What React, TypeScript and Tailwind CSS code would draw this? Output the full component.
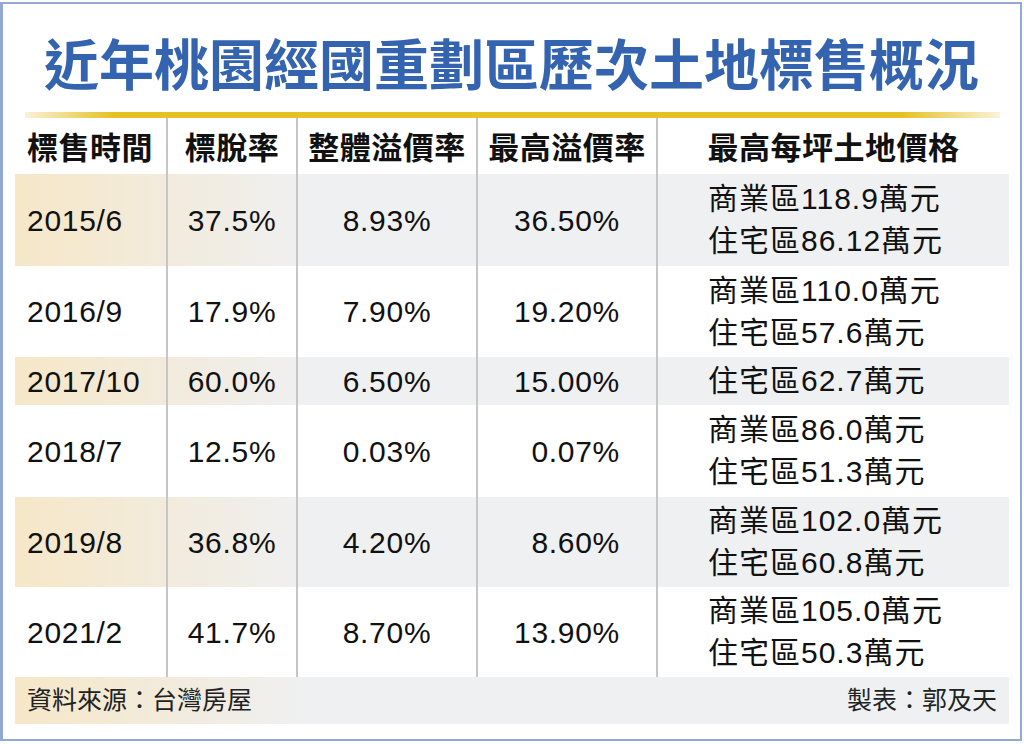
import React from "react";

type Row = {
  date: string;
  rate: string;
  premium: string;
  maxPremium: string;
  prices: string[];
  height: string;
  shaded: boolean;
};

const rows: Row[] = [
  { date: "2015/6", rate: "37.5%", premium: "8.93%", maxPremium: "36.50%", prices: ["商業區118.9萬元", "住宅區86.12萬元"], height: "h-[92px]", shaded: true },
  { date: "2016/9", rate: "17.9%", premium: "7.90%", maxPremium: "19.20%", prices: ["商業區110.0萬元", "住宅區57.6萬元"], height: "h-[91px]", shaded: false },
  { date: "2017/10", rate: "60.0%", premium: "6.50%", maxPremium: "15.00%", prices: ["住宅區62.7萬元"], height: "h-[48px]", shaded: true },
  { date: "2018/7", rate: "12.5%", premium: "0.03%", maxPremium: "0.07%", prices: ["商業區86.0萬元", "住宅區51.3萬元"], height: "h-[92px]", shaded: false },
  { date: "2019/8", rate: "36.8%", premium: "4.20%", maxPremium: "8.60%", prices: ["商業區102.0萬元", "住宅區60.8萬元"], height: "h-[90px]", shaded: true },
  { date: "2021/2", rate: "41.7%", premium: "8.70%", maxPremium: "13.90%", prices: ["商業區105.0萬元", "住宅區50.3萬元"], height: "h-[90px]", shaded: false },
];

const shade =
  "bg-[linear-gradient(to_right,#f6e7c8_0px,#f2ebdc_150px,#eff0f1_290px,#eff0f2_100%)]";

const divider = "border-l-2 border-[#c6c6c6]";

export default function App() {
  return (
    <div className="w-[1024px] h-[744px] bg-white pt-[2px] font-['Liberation_Sans','Noto_Sans_CJK_TC',sans-serif] text-[#111]">
      <div className="w-[1022px] h-[739px] border-2 border-l-[3px] border-[#92a9d2] bg-white flex flex-col">
        <div className="h-[108px] pt-[24px] text-center text-[55px] leading-[66px] font-bold text-[#3464b0] font-['Noto_Sans_CJK_TC',sans-serif]">
          近年桃園經國重劃區歷次土地標售概況
        </div>
        <div className="ml-[22px] w-[975px] h-[6px] bg-[linear-gradient(to_right,#faf1d8_0%,#e6c124_9%,#e6c124_90%,#faf2dc_100%)]" />

        <div className="ml-[12px] w-[994px] flex flex-col">
          <div className="h-[56px] flex items-stretch font-bold text-[31px] tracking-[0.5px] font-['Noto_Sans_CJK_TC',sans-serif]">
            <div className="w-[151px] pl-[12px] flex items-center">標售時間</div>
            <div className={`w-[130px] ${divider} flex items-center justify-center`}>標脫率</div>
            <div className={`w-[180px] ${divider} flex items-center justify-center`}>整體溢價率</div>
            <div className={`w-[180px] ${divider} flex items-center justify-center`}>最高溢價率</div>
            <div className={`w-[353px] ${divider} flex items-center justify-center`}>最高每坪土地價格</div>
          </div>

          {rows.map((row) => (
            <div
              key={row.date}
              className={`${row.height} flex items-stretch text-[30px] tracking-[0.7px] ${row.shaded ? shade : "bg-white"}`}
            >
              <div className="w-[151px] pl-[12px] flex items-center">{row.date}</div>
              <div className={`w-[130px] ${divider} flex items-center justify-center`}>{row.rate}</div>
              <div className={`w-[180px] ${divider} flex items-center justify-center`}>{row.premium}</div>
              <div className={`w-[180px] ${divider} flex items-center justify-end pr-[36px]`}>{row.maxPremium}</div>
              <div className={`w-[353px] ${divider} flex flex-col justify-center pl-[50px] leading-[42px] tracking-[1px]`}>
                {row.prices.map((p) => (
                  <div key={p}>{p}</div>
                ))}
              </div>
            </div>
          ))}

          <div className={`h-[47px] flex items-center justify-between px-[12px] text-[25px] text-[#222] ${shade}`}>
            <span>資料來源：台灣房屋</span>
            <span>製表：郭及天</span>
          </div>
        </div>
      </div>
    </div>
  );
}
